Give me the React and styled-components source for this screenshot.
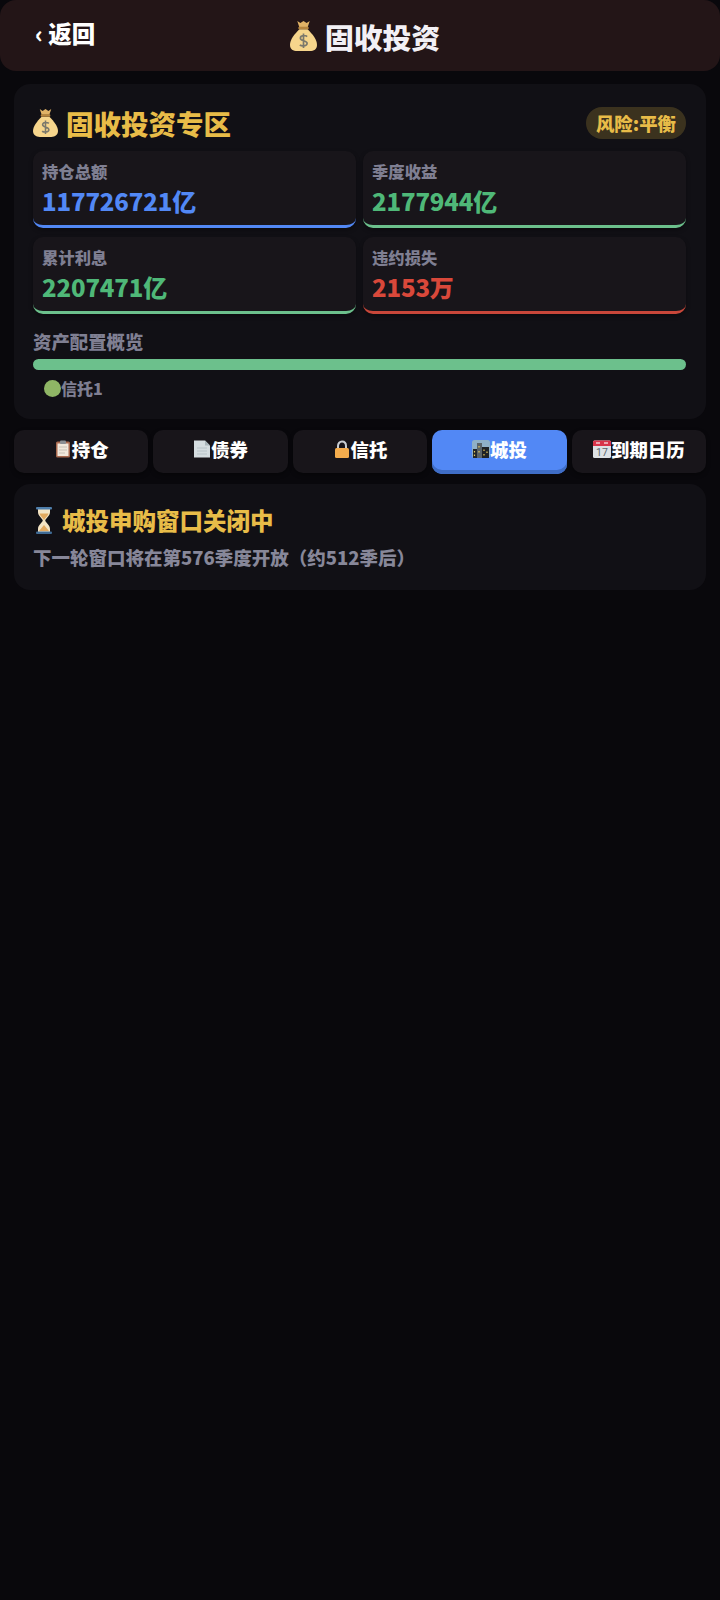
import React from "react";
import styled, { createGlobalStyle } from "styled-components";

const GlobalStyle = createGlobalStyle`
  * {
    box-sizing: border-box;
  }
  html,
  body {
    margin: 0;
    padding: 0;
    background: #09080c;
  }
  body {
    font-family: "Noto Sans CJK SC", "Noto Sans", sans-serif;
  }
`;

const Page = styled.div`
  min-height: 1600px;
  background: #09080c;
`;

const Header = styled.header`
  position: relative;
  display: flex;
  align-items: center;
  justify-content: center;
  height: 71px;
  background: #231517;
  border-radius: 16px;
`;

const BackButton = styled.div`
  position: absolute;
  left: 35px;
  top: 17px;
  color: #fff;
  font-size: 23.5px;
  font-weight: 900;
  line-height: 32px;
`;

const HeaderTitle = styled.h1`
  display: flex;
  align-items: center;
  gap: 8px;
  margin: 2px 0 0;
  padding-left: 10px;
  color: #f2f0f5;
  font-size: 28.8px;
  font-weight: 900;
  line-height: 40px;
`;

const Content = styled.main`
  display: flex;
  flex-direction: column;
  padding: 13px 14px;
`;

const Card = styled.section`
  padding: 20px 20px 19px 19px;
  background: #111015;
  border-radius: 16px;
`;

const CardHead = styled.div`
  display: flex;
  align-items: center;
  justify-content: space-between;
  height: 40px;
  margin-bottom: 7px;
`;

const CardTitle = styled.h2`
  display: flex;
  align-items: center;
  gap: 8px;
  margin: -2px 0 0;
  color: #e8bc48;
  font-size: 27.5px;
  font-weight: 900;
  line-height: 40px;
`;

const RiskBadge = styled.span`
  height: 32px;
  margin-top: -2px;
  padding: 0 10px;
  color: #e8bc48;
  background: rgba(232, 188, 72, 0.2);
  border-radius: 16px;
  font-size: 18.4px;
  font-weight: 900;
  line-height: 32px;
`;

const StatGrid = styled.div`
  display: grid;
  grid-template-columns: 1fr 1fr;
  gap: 9px 7px;
`;

const StatCell = styled.div`
  height: 77px;
  padding: 8px 9px 0;
  background: #18151a;
  border-bottom: 3px solid ${(p) => p.$color};
  border-radius: 10px;
  box-shadow: 0 2px 4px rgba(0, 0, 0, 0.35);
`;

const StatLabel = styled.div`
  color: #7f7f92;
  font-size: 16.32px;
  font-weight: 900;
  line-height: 24px;
`;

const StatValue = styled.div`
  margin-top: 1px;
  color: ${(p) => p.$color};
  font-size: 24px;
  font-weight: 900;
  letter-spacing: -0.15px;
  line-height: 34px;
`;

const SectionLabel = styled.div`
  margin-top: 14px;
  color: #7f7f92;
  font-size: 18.4px;
  font-weight: 900;
  line-height: 26px;
`;

const Bar = styled.div`
  display: flex;
  height: 11px;
  margin-top: 5px;
  overflow: hidden;
  border-radius: 6px;
`;

const BarPart = styled.div`
  flex: ${(p) => p.$share};
  background: ${(p) => p.$color};
`;

const Legend = styled.div`
  margin: 6px 0 0 11px;
  color: #7f7f92;
  font-size: 16px;
  font-weight: 900;
  line-height: 24px;
`;

const Dot = styled.span`
  display: inline-block;
  width: 17px;
  height: 17px;
  vertical-align: -2px;
  background: #8fb565;
  border-radius: 50%;
`;

const Tabs = styled.nav`
  display: grid;
  grid-template-columns: repeat(5, 1fr);
  align-items: start;
  gap: 5px;
  margin-top: 11px;
`;

const Tab = styled.button`
  display: flex;
  align-items: center;
  justify-content: center;
  height: ${(p) => (p.$active ? "44px" : "43px")};
  padding: 0 0 ${(p) => (p.$active ? "7px" : "6px")};
  color: #fff;
  background: ${(p) => (p.$active ? "#5288f5" : "#18151a")};
  border: none;
  border-radius: 10px;
  box-shadow: ${(p) =>
    p.$active ? "inset 0 -4px 0 #3f6dc6" : "0 2px 4px rgba(0, 0, 0, 0.35)"};
  font-family: inherit;
  font-size: 18.4px;
  font-weight: 900;
  white-space: nowrap;
`;

const NoticeCard = styled.section`
  margin-top: 10px;
  padding: 18px 19px 19px;
  background: #111015;
  border-radius: 16px;
`;

const NoticeTitle = styled.h3`
  display: flex;
  align-items: center;
  gap: 9px;
  margin: 0 0 0 2px;
  color: #e8bc48;
  font-size: 23.5px;
  font-weight: 900;
  line-height: 36px;
`;

const NoticeText = styled.p`
  margin: 5px 0 0;
  color: #878799;
  font-size: 18.5px;
  font-weight: 900;
  line-height: 28px;
`;

function MoneyBag({ size = 26 }) {
  return (
    <svg width={size} height={(size * 29) / 26} viewBox="0 0 26 29">
      <path d="M7 0 L10 2 L13 0 L16 2 L19 0 L17 6 H9 Z" fill="#e0b266" />
      <path
        d="M9 8 C4 13 0 18 0 23 C0 27 3 29 7 29 H19 C23 29 26 27 26 23 C26 18 22 13 17 8 Z"
        fill="#f6d58c"
      />
      <rect x="8" y="5.5" width="10" height="2.5" rx="1" fill="#b5853f" />
      <path
        d="M16.5 15 C15 13.5 10 13.5 10 16.5 C10 19.5 16.5 18.5 16.5 21.5 C16.5 24.5 11 24.5 9.5 23 M13 12 V26"
        fill="none"
        stroke="#7b786c"
        strokeWidth="1.6"
      />
    </svg>
  );
}

function Clipboard() {
  return (
    <svg width="18" height="18" viewBox="0 0 18 18">
      <rect x="2" y="1.5" width="14" height="16" rx="1.5" fill="#a8694f" />
      <rect x="3.5" y="3.5" width="11" height="12.5" fill="#f1e8dc" />
      <rect x="6" y="0.5" width="6" height="3.5" rx="1" fill="#8b8f94" />
      <path d="M5 7 H13 M5 10 H13 M5 13 H11" stroke="#c9c2b8" strokeWidth="1" />
    </svg>
  );
}

function Document() {
  return (
    <svg width="18" height="18" viewBox="0 0 18 18">
      <path d="M1 0.5 H12 L17 5.5 V17.5 H1 Z" fill="#d5dde0" />
      <path d="M12 0.5 L17 5.5 H12 Z" fill="#a9b5ba" />
      <path d="M4 8 H14 M4 11 H14 M4 14 H14" stroke="#b8c3c8" strokeWidth="1" />
    </svg>
  );
}

function Lock() {
  return (
    <svg width="18" height="18" viewBox="0 0 18 18">
      <path
        d="M5 9 V6 C5 3.2 6.8 1.5 9 1.5 C11.2 1.5 13 3.2 13 6 V9"
        fill="none"
        stroke="#c9ced3"
        strokeWidth="2"
      />
      <rect x="2" y="8" width="14" height="10" rx="1.5" fill="#f4ac4d" />
    </svg>
  );
}

function City() {
  return (
    <svg width="18" height="18" viewBox="0 0 18 18">
      <rect x="0" y="0" width="18" height="18" rx="2.5" fill="#8fb0c8" />
      <rect x="1" y="9" width="4" height="9" fill="#23272b" />
      <rect x="5" y="3" width="5" height="15" fill="#5a6368" />
      <rect x="10" y="7" width="7" height="11" fill="#1f2226" />
      <path
        d="M2.5 11 V12.5 M2.5 14.5 V16 M7 6 V7.5 M7 11 V12.5 M12 9.5 V11 M15 11.5 V13 M12 14 V15.5"
        stroke="#e8c95c"
        strokeWidth="1.2"
      />
    </svg>
  );
}

function Calendar() {
  return (
    <svg width="18" height="18" viewBox="0 0 18 18">
      <rect x="0" y="0.5" width="18" height="17.5" rx="1.5" fill="#dde1e4" />
      <path d="M1.5 0.5 H16.5 A1.5 1.5 0 0 1 18 2 V6 H0 V2 A1.5 1.5 0 0 1 1.5 0.5 Z" fill="#d8344a" />
      <path d="M3 3 H7 M11 3 H15" stroke="#f3c9cf" strokeWidth="1.4" />
      <text
        x="9"
        y="16.2"
        textAnchor="middle"
        fontSize="10.5"
        fontWeight="400"
        fontFamily="Roboto, sans-serif"
        fill="#5b6770"
      >
        17
      </text>
    </svg>
  );
}

function Hourglass() {
  return (
    <svg width="18" height="27" viewBox="0 0 18 27">
      <path d="M3 2 H15 V5 C15 9 11 11 10.2 13.5 C11 16 15 18 15 22 V25 H3 V22 C3 18 7 16 7.8 13.5 C7 11 3 9 3 5 Z" fill="#f4e4c4" />
      <path d="M4.5 6.5 H13.5 C13 9 10 11 9 13 C8 11 5 9 4.5 6.5 Z M9 18 L14 24 H4 Z" fill="#e2a95f" />
      <rect x="1" y="0" width="16" height="2.5" rx="1" fill="#4f7fac" />
      <rect x="1" y="24.5" width="16" height="2.5" rx="1" fill="#3f6a94" />
    </svg>
  );
}

const stats = [
  { label: "持仓总额", value: "117726721亿", color: "#5288f5", line: "#5288f5" },
  { label: "季度收益", value: "2177944亿", color: "#4fb878", line: "#6cc08c" },
  { label: "累计利息", value: "2207471亿", color: "#4fb878", line: "#6cc08c" },
  { label: "违约损失", value: "2153万", color: "#d9483a", line: "#c9473a" },
];

const tabs = [
  { key: "hold", label: "持仓", icon: <Clipboard /> },
  { key: "bond", label: "债券", icon: <Document /> },
  { key: "trust", label: "信托", icon: <Lock /> },
  { key: "city", label: "城投", icon: <City />, active: true },
  { key: "calendar", label: "到期日历", icon: <Calendar /> },
];

export default function App() {
  return (
    <Page>
      <GlobalStyle />
      <Header>
        <BackButton>‹ 返回</BackButton>
        <HeaderTitle>
          <MoneyBag size={27} />
          固收投资
        </HeaderTitle>
      </Header>
      <Content>
        <Card>
          <CardHead>
            <CardTitle>
              <MoneyBag size={25} />
              固收投资专区
            </CardTitle>
            <RiskBadge>风险:平衡</RiskBadge>
          </CardHead>
          <StatGrid>
            {stats.map((s) => (
              <StatCell key={s.label} $color={s.line}>
                <StatLabel>{s.label}</StatLabel>
                <StatValue $color={s.color}>{s.value}</StatValue>
              </StatCell>
            ))}
          </StatGrid>
          <SectionLabel>资产配置概览</SectionLabel>
          <Bar>
            <BarPart $share={1} $color="#6cc08c" />
          </Bar>
          <Legend>
            <Dot />
            信托1
          </Legend>
        </Card>
        <Tabs>
          {tabs.map((t) => (
            <Tab key={t.key} $active={t.active}>
              {t.icon}
              {t.label}
            </Tab>
          ))}
        </Tabs>
        <NoticeCard>
          <NoticeTitle>
            <Hourglass />
            城投申购窗口关闭中
          </NoticeTitle>
          <NoticeText>下一轮窗口将在第576季度开放（约512季后）</NoticeText>
        </NoticeCard>
      </Content>
    </Page>
  );
}
